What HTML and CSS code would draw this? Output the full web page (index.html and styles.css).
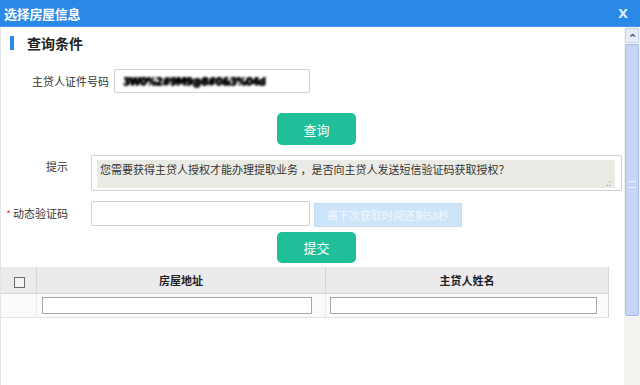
FILE: index.html
```html
<!DOCTYPE html>
<html lang="zh-CN">
<head>
    <meta charset="UTF-8">
    <meta name="viewport" content="width=device-width, initial-scale=1.0">
    <title>选择房屋信息</title>
    <link rel="stylesheet" href="styles.css">
</head>
<body>
    <div class="dialog">
        <!-- Title bar -->
        <div class="titlebar">
            <span class="title">选择房屋信息</span>
            <span class="close">X</span>
        </div>

        <div class="dialog-body">
            <div class="content">
                <div class="section-head">
                    <span class="bar"></span>
                    <h2>查询条件</h2>
                </div>

                <div class="row row-id">
                    <label>主贷人证件号码</label>
                    <div class="input id-input"><span class="masked">3W0%2#9M9@8#0&amp;3%04d</span></div>
                </div>

                <div class="actions first">
                    <button class="btn">查询</button>
                </div>

                <div class="row row-hint">
                    <label>提示</label>
                    <div class="hint-box">
                        <div class="hint-text">您需要获得主贷人授权才能办理提取业务 ，是否向主贷人发送短信验证码获取授权？</div>
                        <span class="grip">.:</span>
                    </div>
                </div>

                <div class="row row-code">
                    <label><span class="req">*</span>动态验证码</label>
                    <input type="text" class="input code-input">
                    <button class="btn-wait" disabled>离下次获取时间还剩58秒</button>
                </div>

                <div class="actions second">
                    <button class="btn">提交</button>
                </div>

                <table class="grid">
                    <thead>
                        <tr>
                            <th class="col-check"><span class="checkbox"></span></th>
                            <th class="col-addr">房屋地址</th>
                            <th class="col-name">主贷人姓名</th>
                        </tr>
                    </thead>
                    <tbody>
                        <tr>
                            <td class="col-check"></td>
                            <td><input type="text" class="cell-input"></td>
                            <td><input type="text" class="cell-input"></td>
                        </tr>
                    </tbody>
                </table>
            </div>

            <!-- Scrollbar -->
            <div class="scrollbar">
                <div class="scroll-up">&#8963;</div>
                <div class="scroll-thumb"><span class="thumb-grip"></span></div>
                <div class="scroll-track"></div>
            </div>
        </div>
    </div>
</body>
</html>
```

FILE: styles.css
```css
/* General */
body {
    margin: 0;
    padding: 0;
    font-family: "Noto Sans CJK SC", "Noto Sans", sans-serif;
    font-size: 11px;
    color: #333333;
    background-color: #ffffff;
}

.dialog {
    width: 640px;
    height: 385px;
    overflow: hidden;
    display: flex;
    flex-direction: column;
}

/* Title bar */
.titlebar {
    height: 26px;
    background-color: #2a89e6;
    border-bottom: 1px solid #4a9ae8;
    display: flex;
    align-items: center;
    justify-content: space-between;
    padding: 0 12px 0 4px;
    color: #ffffff;
}

.title {
    font-size: 13px;
    font-weight: bold;
    letter-spacing: -0.3px;
}

.close {
    font-family: "DejaVu Sans", sans-serif;
    font-size: 13px;
    font-weight: bold;
    color: #d8ecff;
}

.dialog-body {
    flex: 1;
    display: flex;
}

.content {
    width: 624px;
    border-left: 1px solid #e4e4e4;
    box-sizing: border-box;
}

/* Section header */
.section-head {
    display: flex;
    align-items: center;
    height: 14px;
    margin-top: 9px;
}

.section-head .bar {
    width: 4px;
    height: 14px;
    margin-left: 9px;
    background-color: #2a89e6;
}

.section-head h2 {
    margin: 0 0 0 13px;
    font-size: 14px;
    font-weight: bold;
    color: #222222;
    line-height: 14px;
}

/* Form rows */
.row {
    display: flex;
    align-items: center;
}

.row label {
    color: #333333;
    white-space: nowrap;
}

.row-id {
    margin-top: 19px;
}

.row-id label {
    width: 75px;
    padding-left: 31px;
    margin-right: 7px;
}

.input {
    box-sizing: border-box;
    border: 1px solid #cfcfcf;
    border-radius: 2px;
    background-color: #ffffff;
    outline: none;
}

.id-input {
    width: 196px;
    height: 24px;
    display: flex;
    align-items: center;
    padding-left: 8px;
}

.masked {
    display: inline-block;
    font-family: "DejaVu Sans", sans-serif;
    font-size: 10px;
    font-weight: bold;
    color: #000000;
    letter-spacing: -0.6px;
    filter: blur(1px);
    text-shadow: 1px 0 0 #000000, 0 1px 0 #333333;
}

/* Buttons */
.actions {
    padding-left: 276px;
    height: 32px;
}

.actions.first {
    margin-top: 20px;
}

.actions.second {
    margin-top: 6px;
    height: 31px;
}

.btn {
    display: block;
    width: 79px;
    height: 32px;
    border: none;
    border-radius: 5px;
    background-color: #1fbf99;
    color: #ffffff;
    font-family: "Noto Sans CJK SC", sans-serif;
    font-size: 13px;
    padding: 0;
    cursor: pointer;
}

.actions.second .btn {
    height: 31px;
}

/* Hint */
.row-hint {
    margin-top: 10px;
    align-items: flex-start;
}

.row-hint label {
    padding-top: 3px;
}

.row-hint label,
.row-code label {
    width: 67px;
    text-align: right;
    margin-right: 23px;
}

.hint-box {
    width: 531px;
    height: 36px;
    box-sizing: border-box;
    border: 1px solid #cfcfcf;
    border-radius: 2px;
    padding: 4px 6px 2px 5px;
    display: flex;
    position: relative;
}

.hint-text {
    flex: 1;
    background-color: #ebebe5;
    color: #333333;
    padding: 1px 0 0 3px;
    line-height: 16px;
    white-space: nowrap;
}

.grip {
    position: absolute;
    right: 10px;
    bottom: 3px;
    font-size: 9px;
    color: #999999;
    line-height: 9px;
}

/* Dynamic code */
.row-code {
    margin-top: 10px;
    align-items: flex-start;
    height: 25px;
}

.row-code label {
    line-height: 25px;
}

.req {
    color: #e04040;
    margin-right: 2px;
    font-size: 10px;
}

.code-input {
    width: 219px;
    height: 25px;
}

.btn-wait {
    width: 148px;
    height: 24px;
    margin-left: 4px;
    margin-top: 2px;
    border: 1px dotted #b8d6f0;
    background-color: #cde5f9;
    color: #f2f8fe;
    font-family: "Noto Sans CJK SC", sans-serif;
    font-size: 11px;
    padding: 0;
}

/* Table */
.grid {
    margin-top: 4px;
    width: 608px;
    border-collapse: collapse;
    table-layout: fixed;
}

.grid th {
    height: 26px;
    background-color: #ebebee;
    border-bottom: 1px solid #d6d6d8;
    border-right: 1px solid #d6d6d8;
    font-size: 11px;
    font-weight: bold;
    color: #222222;
    padding: 0;
}

.grid .col-check {
    width: 35px;
}

.grid .col-addr {
    width: 288px;
}

.checkbox {
    display: inline-block;
    width: 9px;
    height: 9px;
    border: 1px solid #6b6b6b;
    background-color: #f2f2f2;
    vertical-align: middle;
    margin-left: 1px;
}

.grid td {
    height: 23px;
    border-bottom: 1px solid #e2e2e2;
    border-right: 1px solid #ececec;
    padding: 0;
    background-color: #fbfbfb;
}

.grid td:last-child,
.grid th:last-child {
    border-right: 1px solid #d6d6d8;
}

.cell-input {
    display: block;
    box-sizing: border-box;
    width: 270px;
    height: 17px;
    margin-left: 5px;
    border: 1px solid #a6a6a6;
    background-color: #ffffff;
    outline: none;
}

.grid td:last-child .cell-input {
    width: 267px;
    margin-left: 4px;
}

/* Scrollbar */
.scrollbar {
    width: 16px;
    display: flex;
    flex-direction: column;
    background-color: #f3f3ef;
}

.scroll-up {
    height: 13px;
    margin: 1px 1px 0 1px;
    border: 1px solid #c7d4ee;
    border-radius: 2px;
    background-color: #e4ecfb;
    color: #4d6185;
    font-size: 11px;
    font-weight: bold;
    line-height: 16px;
    text-align: center;
}

.scroll-thumb {
    height: 270px;
    margin: 1px 1px 0 1px;
    border: 1px solid #a7bbe6;
    border-radius: 2px;
    background-color: #c5d5f7;
    display: flex;
    align-items: center;
    justify-content: center;
}

.thumb-grip {
    width: 7px;
    height: 5px;
    border-top: 1px solid #eef3fd;
    border-bottom: 1px solid #eef3fd;
    position: relative;
    top: 4px;
}

.scroll-track {
    flex: 1;
}
```
